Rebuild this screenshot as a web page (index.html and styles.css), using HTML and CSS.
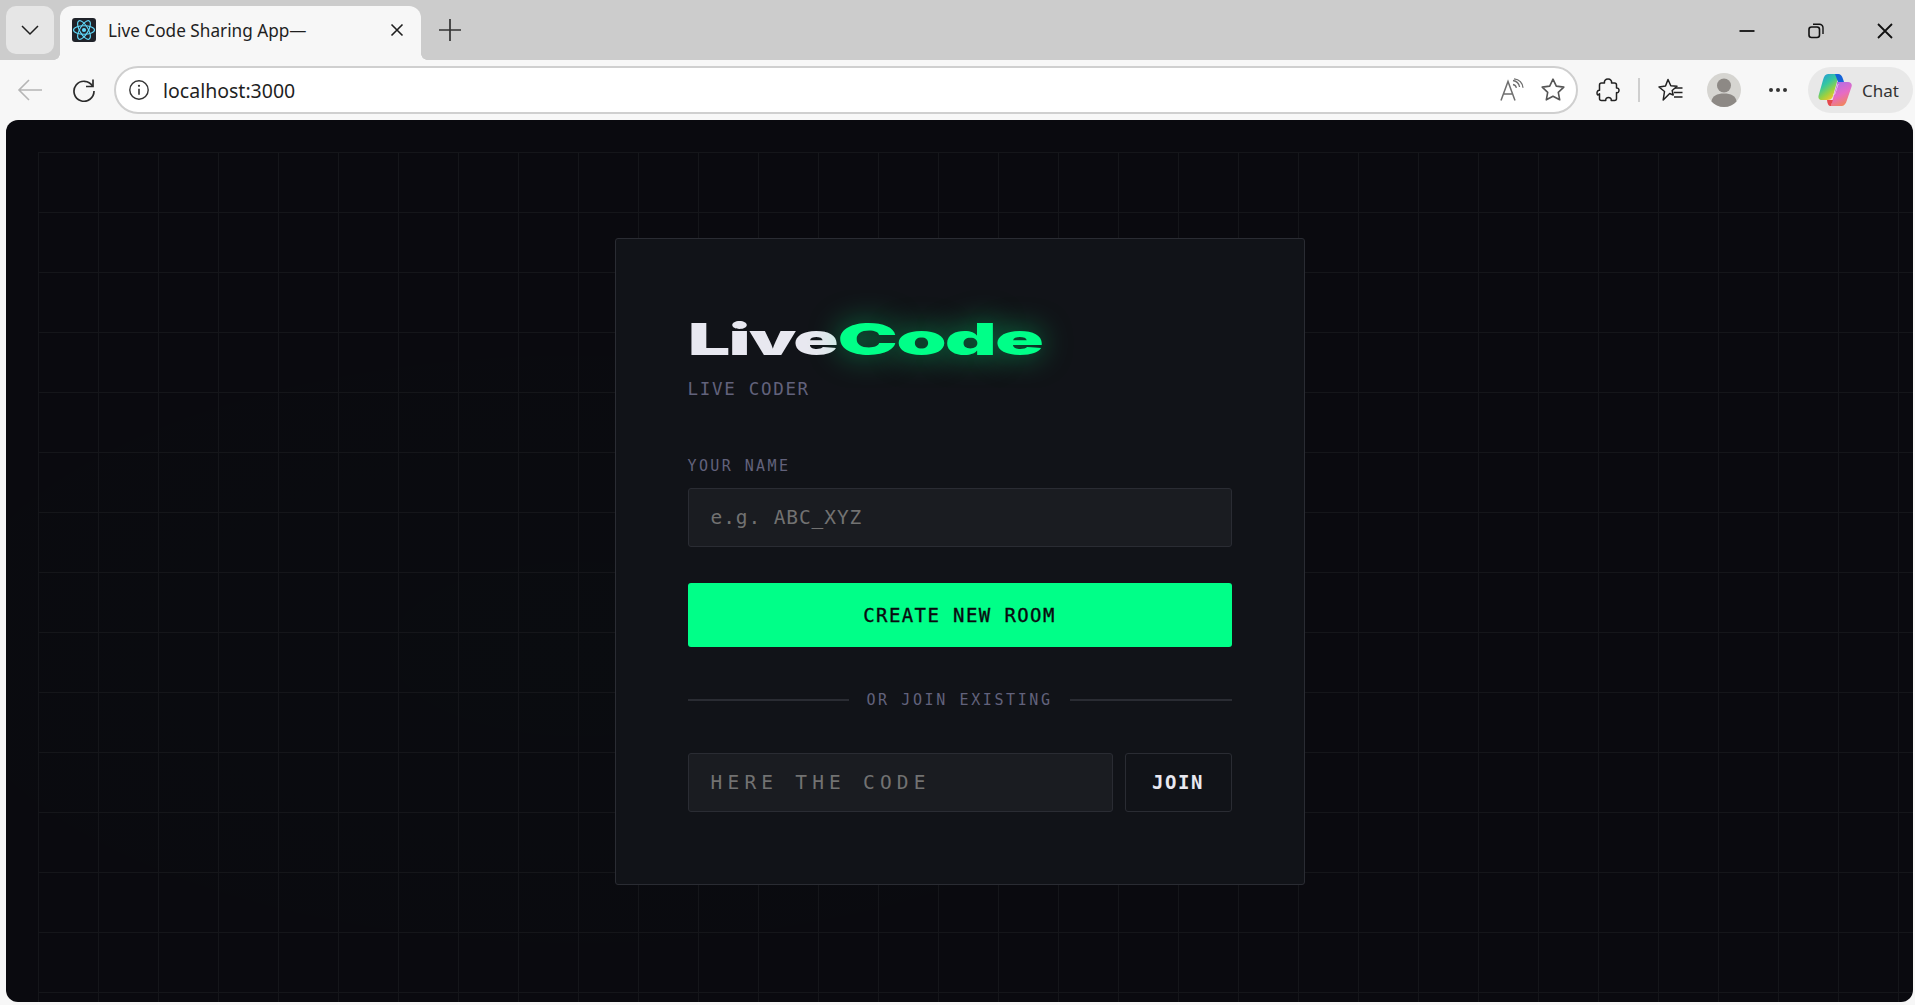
FILE: index.html
```html
<!DOCTYPE html>
<html lang="en">
<head>
<meta charset="UTF-8" />
<title>Live Code Sharing App</title>
<link rel="stylesheet" href="styles.css">
</head>
<body>

<!-- Browser tab strip -->
<div class="tabstrip">
  <button class="tab-menu">
    <svg width="20" height="20" viewBox="0 0 20 20"><path d="M2 6l8 8 8-8" fill="none" stroke="#1f1f1f" stroke-width="1.5"/></svg>
  </button>
  <div class="tab">
    <svg class="favicon" width="24" height="24" viewBox="0 0 24 24">
      <rect width="24" height="24" rx="3" fill="#20232a"/>
      <circle cx="12" cy="12" r="2.1" fill="#61dafb"/>
      <g fill="none" stroke="#61dafb" stroke-width="1.1">
        <ellipse cx="12" cy="12" rx="10.5" ry="4.2"/>
        <ellipse cx="12" cy="12" rx="10.5" ry="4.2" transform="rotate(60 12 12)"/>
        <ellipse cx="12" cy="12" rx="10.5" ry="4.2" transform="rotate(120 12 12)"/>
      </g>
    </svg>
    <span class="tab-title">Live Code Sharing App—</span>
    <svg class="tab-close" width="14" height="14" viewBox="0 0 14 14"><path d="M1.5 1.5l11 11M12.5 1.5l-11 11" stroke="#1f1f1f" stroke-width="1.6"/></svg>
  </div>
  <svg class="new-tab" width="24" height="24" viewBox="0 0 24 24"><path d="M12 1v22M1 12h22" stroke="#333" stroke-width="1.7"/></svg>
  <div class="win-controls">
    <svg width="16" height="16" viewBox="0 0 16 16"><path d="M0.5 8h15" stroke="#111" stroke-width="1.8"/></svg>
    <svg width="16" height="16" viewBox="0 0 16 16"><rect x="1" y="4" width="10.5" height="10.5" rx="2.5" fill="none" stroke="#111" stroke-width="1.6"/><path d="M5 1.2h6.5a3.5 3.5 0 0 1 3.5 3.5V11" fill="none" stroke="#111" stroke-width="1.4"/></svg>
    <svg width="16" height="16" viewBox="0 0 16 16"><path d="M1 1l14 14M15 1L1 15" stroke="#111" stroke-width="1.8"/></svg>
  </div>
</div>

<!-- Address bar row -->
<div class="toolbar">
  <svg class="tool-back" width="26" height="24" viewBox="0 0 26 24"><path d="M25 12H2M12 2L2 12l10 10" fill="none" stroke="#b5b5b5" stroke-width="1.6"/></svg>
  <svg class="tool-reload" width="24" height="24" viewBox="0 0 24 24"><path d="M20.5 8A10 10 0 1 0 22 13" fill="none" stroke="#2b2b2b" stroke-width="1.7"/><path d="M21 1.5V8.5H14" fill="none" stroke="#2b2b2b" stroke-width="1.7"/></svg>
  <div class="addressbar">
    <svg width="22" height="22" viewBox="0 0 22 22"><circle cx="11" cy="11" r="9.2" fill="none" stroke="#333" stroke-width="1.4"/><path d="M11 9.8v6" stroke="#333" stroke-width="1.6"/><circle cx="11" cy="6.8" r="1.1" fill="#333"/></svg>
    <span class="url">localhost:3000</span>
    <svg class="read-aloud" width="24" height="24" viewBox="0 0 24 24"><path d="M1 22.500L8 3.500 15 22.500M3.600 16h9" fill="none" stroke="#6f6f6f" stroke-width="1.5"/><path d="M13 2.500c4 .6 6 3 6.600 6.500M13 6.500c2 .4 3 1.400 3.400 3.300M14 .8c5 .6 8.500 4 9 9" fill="none" stroke="#6f6f6f" stroke-width="1.3"/></svg>
    <svg width="26" height="26" viewBox="0 0 26 26"><path d="M13 2.200l3.300 6.900 7.500 1-5.500 5.200 1.400 7.500L13 19.200 6.300 22.800l1.400-7.500L2.200 10.100l7.500-1z" fill="none" stroke="#555" stroke-width="1.6" stroke-linejoin="round"/></svg>
  </div>
  <svg class="tool-ext" width="24" height="24" viewBox="-1 0 24 24"><path d="M7.500 5c-.6-2.300 1-4 3.500-4s4.100 1.700 3.500 4h3c1.300 0 2 .7 2 2v3c1.500-.3 2.500.8 2.500 2.300s-1 2.700-2.500 2.300v5.900c0 1.300-.7 2-2 2h-3.300c.4-1.800-1-3-2.700-3s-3.100 1.200-2.700 3H4.500c-1.300 0-2-.7-2-2v-4.700C.9 18 0 16.500 0 15s.9-3 2.500-2.700V7c0-1.300.7-2 2-2z" fill="none" stroke="#222" stroke-width="1.500" stroke-linejoin="round"/></svg>
  <span class="tool-sep"></span>
  <svg class="tool-fav" width="26" height="24" viewBox="0 0 26 24"><path d="M11 1.500l2.800 6.200 6.200.6-4.800 4.200 1 4.500-3.500-1.500-6.500 6.500 1.300-8.500L2 9l6.500-1z" fill="none" stroke="#222" stroke-width="1.500" stroke-linejoin="round"/><path d="M18 10h7.500M17 14.500h8.500M17 19h8.500" stroke="#222" stroke-width="1.500"/></svg>
  <svg class="tool-avatar" width="34" height="34" viewBox="0 0 34 34"><circle cx="17" cy="17" r="17" fill="#d6d5d1"/><circle cx="17" cy="12.500" r="7" fill="#8d8985"/><path d="M4.500 28.500C5 23 10 20.500 17 20.500s12 2.500 12.500 8C26.500 32 22 34 17 34S7.500 32 4.500 28.500z" fill="#8d8985"/></svg>
  <svg class="tool-dots" width="20" height="6" viewBox="0 0 20 6"><circle cx="3" cy="3" r="2" fill="#333"/><circle cx="10" cy="3" r="2" fill="#333"/><circle cx="17" cy="3" r="2" fill="#333"/></svg>
  <div class="chat-pill">
    <svg width="34" height="32" viewBox="0 0 34 32">
      <defs>
        <linearGradient id="cop-a" x1="0" y1="0" x2="0.6" y2="1">
          <stop offset="0" stop-color="#1f8fe8"/><stop offset="0.45" stop-color="#35c8a0"/><stop offset="0.75" stop-color="#9bd13f"/><stop offset="1" stop-color="#f7c52e"/>
        </linearGradient>
        <linearGradient id="cop-b" x1="0.3" y1="0" x2="0.7" y2="1">
          <stop offset="0" stop-color="#b06fe6"/><stop offset="0.5" stop-color="#e76bc4"/><stop offset="1" stop-color="#f2884e"/>
        </linearGradient>
      </defs>
      <path d="M10 0h9c1.500 0 2 .8 1.500 2.200L15 22c-1 3-3 4-6 4H4C1 26 0 24 .6 21.500L5 6c1-3.800 2.500-6 5-6z" fill="url(#cop-a)"/>
      <path d="M17 0h3c2.500 0 4 1.500 5 5l1 3h-6z" fill="#1463d8"/>
      <path d="M19 8h11c2.800 0 4.300 1.800 3.600 4.500L29 26c-1.200 4-3 6-5.500 6H15c-1.500 0-2-1-1.500-2.200L19 10z" fill="url(#cop-b)"/>
      <path d="M9 26h6l-1.500 4c-.3 1-.3 2 1 2h-2c-2 0-3-2-3.500-6z" fill="#e5484d"/>
      <path d="M20.500 10l-3 9c-.4 1.500-1.500 2-3 2 1.500-.2 2.500-1.500 3-3l2.500-8z" fill="#fff"/>
    </svg>
    <span class="chat-label">Chat</span>
  </div>
</div>

<!-- App page -->
<main class="viewport">
  <section class="card">
    <h1 class="logo"><span class="logo-live">Live</span><span class="logo-code">Code</span></h1>
    <p class="tagline">LIVE CODER</p>

    <label class="field-label" for="name-input">YOUR NAME</label>
    <input class="text-input" id="name-input" type="text" placeholder="e.g. ABC_XYZ">

    <button class="btn-create">CREATE NEW ROOM</button>

    <div class="divider"><span>OR JOIN EXISTING</span></div>

    <div class="join-row">
      <input class="text-input code-input" type="text" placeholder="HERE THE CODE">
      <button class="btn-join">JOIN</button>
    </div>
  </section>
</main>

</body>
</html>
```

FILE: styles.css
```css
* {
  box-sizing: border-box;
}

html, body {
  height: 100%;
}

body {
  margin: 0;
  background: #f7f7f7;
  display: flex;
  flex-direction: column;
  font-family: "Noto Sans", sans-serif;
}

svg {
  display: block;
  flex: none;
}

/* Tab strip */
.tabstrip {
  height: 60px;
  flex: none;
  background: #cccccc;
  display: flex;
  align-items: flex-end;
  padding-left: 6px;
}

.tab-menu {
  width: 48px;
  height: 48px;
  margin-bottom: 6px;
  padding: 0;
  border: none;
  border-radius: 10px;
  background: #e6e6e6;
  display: flex;
  align-items: center;
  justify-content: center;
}

.tab {
  position: relative;
  width: 361px;
  height: 54px;
  margin-left: 6px;
  padding: 0 17px 6px 12px;
  background: #f7f7f7;
  border-radius: 12px 12px 0 0;
  display: flex;
  align-items: center;
}

/* Small flares where the tab meets the toolbar */
.tab::before,
.tab::after {
  content: "";
  position: absolute;
  bottom: 0;
  width: 6px;
  height: 6px;
}

.tab::before {
  left: -6px;
  background: radial-gradient(circle at 0 0, transparent 5.5px, #f7f7f7 6px);
}

.tab::after {
  right: -6px;
  background: radial-gradient(circle at 100% 0, transparent 5.5px, #f7f7f7 6px);
}

.tab-title {
  margin-left: 12px;
  flex: 1;
  font-size: 17.2px;
  color: #1f1f1f;
}

.new-tab {
  margin: 0 0 18px 17px;
}

.win-controls {
  margin-left: auto;
  padding-right: 22px;
  height: 58px;
  display: flex;
  align-items: center;
  gap: 53px;
}

/* Address bar row */
.toolbar {
  height: 60px;
  flex: none;
  background: #f7f7f7;
  display: flex;
  align-items: center;
  padding: 0 2px 0 17px;
}

.tool-reload {
  margin-left: 29px;
}

.addressbar {
  width: 1464px;
  height: 48px;
  margin-left: 18px;
  padding: 0 10px 0 12px;
  background: #fff;
  border: 2px solid #cfcfcf;
  border-radius: 24px;
  display: flex;
  align-items: center;
}

.url {
  flex: 1;
  margin-left: 13px;
  font-size: 19.5px;
  color: #1f1f1f;
}

.read-aloud {
  margin-right: 16px;
}

.tool-ext {
  margin-left: 18px;
}

.tool-sep {
  width: 2px;
  height: 24px;
  margin-left: 18px;
  background: #cfcfcf;
}

.tool-fav {
  margin-left: 17px;
}

.tool-avatar {
  margin-left: 24px;
}

.tool-dots {
  margin-left: 27px;
}

.chat-pill {
  width: 105px;
  height: 46px;
  margin-left: 20px;
  padding-left: 10px;
  border-radius: 23px;
  background: #e8e8e8;
  display: flex;
  align-items: center;
  gap: 10px;
}

.chat-label {
  font-size: 17px;
  color: #333;
}

/* Page with the grid behind the card */
.viewport {
  flex: 1;
  margin: 0 2px 3px 6px;
  padding: 32px 0 0 32px;
  border-radius: 12px;
  overflow: hidden;
  display: flex;
  align-items: center;
  justify-content: center;
  background-color: #0a0a0f;
  background-image:
    linear-gradient(to right, #15161a 1px, transparent 1px),
    linear-gradient(to bottom, #15161a 1px, transparent 1px),
    radial-gradient(ellipse 45% 45% at 30% 60%, rgba(0,255,136,0.008), transparent);
  background-size: 60px 60px, 60px 60px, 100% 100%;
  background-origin: content-box, content-box, border-box;
  background-clip: content-box, content-box, border-box;
}

.card {
  width: 690px;
  height: 647px;
  margin: -32px 0 0 -32px;
  padding: 72px;
  background: #111318;
  border: 1px solid #2a2c33;
  border-radius: 3px;
  font-family: "DejaVu Sans Mono", monospace;
}

/* Logo */
.logo {
  margin: 0;
  height: 54px;
  font-family: Inter, "Liberation Sans", sans-serif;
  font-size: 44px;
  font-weight: 900;
  line-height: 56px;
  letter-spacing: -1px;
  white-space: nowrap;
  transform: scaleX(1.7);
  transform-origin: left center;
}

.logo-live {
  color: #e8e8f0;
}

.logo-code {
  display: inline-block;
  color: #00ff88;
  text-shadow: 0 0 22px rgba(0,255,136,0.5);
  transform: scaleX(1.08);
  transform-origin: left center;
}

.tagline {
  margin: 14px 0 0;
  font-size: 17.5px;
  line-height: 20px;
  letter-spacing: 1.7px;
  color: #62627c;
}

.field-label {
  display: block;
  margin-top: 58px;
  font-size: 15px;
  line-height: 18px;
  letter-spacing: 2.4px;
  color: #62627c;
}

.text-input {
  display: block;
  width: 100%;
  height: 59px;
  margin-top: 13px;
  padding: 0 22px;
  background: #1a1c21;
  border: 1px solid #2a2c33;
  border-radius: 3px;
  outline: none;
  font-family: inherit;
  font-size: 19.5px;
  letter-spacing: 0.9px;
  color: #e8e8f0;
}

.text-input::placeholder {
  color: #727272;
  opacity: 1;
}

.btn-create {
  display: block;
  width: 100%;
  height: 64px;
  margin-top: 36px;
  padding: 0;
  border: none;
  border-radius: 3px;
  background: #00ff88;
  font-family: inherit;
  font-size: 19px;
  font-weight: 500;
  letter-spacing: 1.4px;
  -webkit-text-stroke: 0.35px #0a0b0f;
  color: #0a0b0f;
}

.divider {
  margin-top: 43px;
  height: 20px;
  display: flex;
  align-items: center;
  gap: 17px;
  font-size: 15px;
  letter-spacing: 2.6px;
  color: #62627c;
}

.divider::before,
.divider::after {
  content: "";
  flex: 1;
  height: 2px;
  background: #2a2c33;
}

.join-row {
  display: flex;
  gap: 12px;
  margin-top: 43px;
}

.code-input {
  flex: 1;
  width: auto;
  min-width: 0;
  margin-top: 0;
  letter-spacing: 5.2px;
}

.btn-join {
  width: 107px;
  height: 59px;
  padding: 0;
  background: #111318;
  border: 1px solid #2a2c33;
  border-radius: 3px;
  font-family: inherit;
  font-size: 19px;
  font-weight: 700;
  letter-spacing: 1.5px;
  color: #e8e8f0;
}
```
